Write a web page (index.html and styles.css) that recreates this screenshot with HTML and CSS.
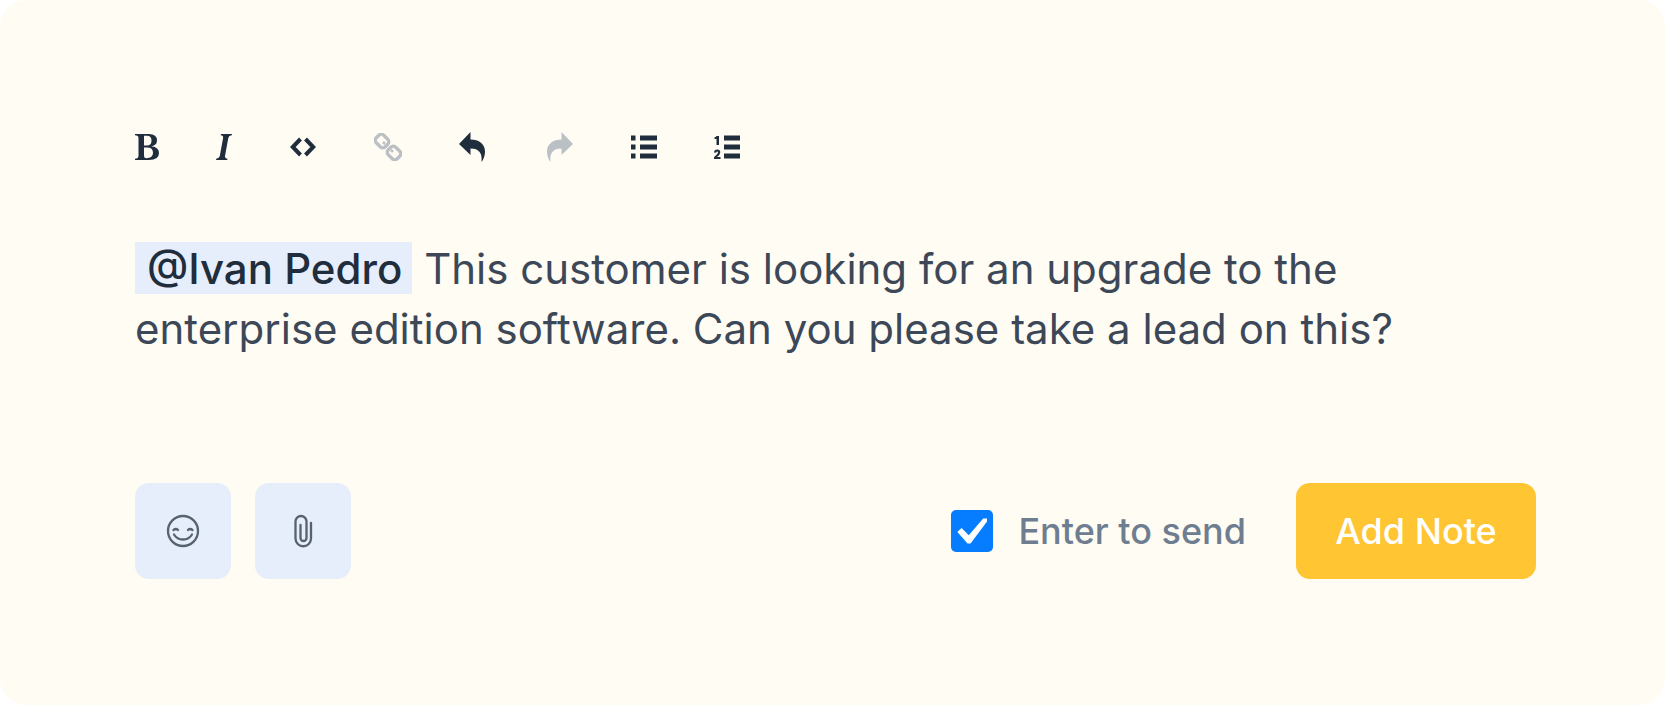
FILE: index.html
```html
<!DOCTYPE html>
<html lang="en">
<head>
<meta charset="utf-8">
<title>Add a private note</title>
<meta name="viewport" content="width=device-width, initial-scale=1">
<link rel="stylesheet" href="styles.css">
</head>
<body>
<form class="note">
  <div class="toolbar" role="toolbar" aria-label="Formatting">
    <button class="tool" type="button" aria-label="Bold">
      <svg width="24" height="28" viewBox="0 0 24 28"><path fill-rule="evenodd" d="M0 1H14Q22 1 22 7.500Q22 12 16.500 13.300Q24 14.500 24 20Q24 27 14 27H0V25.700Q3.500 25.500 3.500 23V5Q3.500 2.500 0 2.300ZM9 2.800V12.600H12Q16.500 12.600 16.500 7.600Q16.500 2.800 12 2.800ZM9 14.400V23Q9 25.200 11.500 25.200Q18 25.200 18 19.800Q18 14.400 12 14.400Z"/></svg>
    </button>
    <button class="tool" type="button" aria-label="Italic">
      <svg width="16" height="28" viewBox="0 0 16 28"><path d="M5 1H16L15.700 2.300Q12.800 2.600 12.300 5L9 23Q8.600 25.400 11.500 25.700L11.200 27H0L.3 25.700Q3.300 25.400 3.800 23L7.100 5Q7.500 2.600 4.700 2.300Z"/></svg>
    </button>
    <button class="tool" type="button" aria-label="Code">
      <svg width="28" height="28" viewBox="-1 0 28 28"><path class="line" stroke-width="4" d="M10.500 6 2.800 14l7.700 8M15.500 6l7.700 8-7.700 8"/></svg>
    </button>
    <button class="tool" type="button" aria-label="Link" disabled>
      <svg width="28" height="28" viewBox="0 0 28 28"><g class="line" stroke-width="3.400"><rect x="-6.300" y="-5.300" width="12.600" height="10.600" rx="3.500" transform="translate(8 8) rotate(45)"/><rect x="-6.300" y="-5.300" width="12.600" height="10.600" rx="3.500" transform="translate(20 20) rotate(45)"/><path stroke-width="2.500" d="M9 9l2 2M17 17l2 2"/></g></svg>
    </button>
    <button class="tool" type="button" aria-label="Undo">
      <svg width="26" height="30" viewBox="0 0 26 30"><path d="M0 12 11.500 0V7.500C20 7.500 26 12 26 19.500Q26 25.500 22.500 30C23.500 21 20 16.500 11.500 16.500V23Z"/></svg>
    </button>
    <button class="tool" type="button" aria-label="Redo" disabled>
      <svg width="32" height="30" viewBox="-5 0 32 30"><path d="M26 12 14.500 0V7.500C6 7.500 0 12 0 19.500Q0 25.500 3.500 30C2.500 21 6 16.500 14.500 16.500V23Z"/></svg>
    </button>
    <button class="tool" type="button" aria-label="Bulleted list">
      <svg width="26" height="24" viewBox="0 0 26 24"><path d="M0 0.500h4.500v5H0zM9 0.500h17v5H9zM0 9.500h4.500v5H0zM9 9.500h17v5H9zM0 18.500h4.500v5H0zM9 18.500h17v5H9z"/></svg>
    </button>
    <button class="tool" type="button" aria-label="Numbered list">
      <svg width="26" height="24" viewBox="0 0 26 24"><path d="M10 0.500h16v5H10zM10 9.500h16v5H10zM10 18.500h16v5H10zM2.500 1H5V10H2.500V4H.5V2.200Q2 2.200 2.500 1ZM0 17.500Q.2 14.500 3.200 14.500Q6.300 14.500 6.300 17.300Q6.300 19.500 3 22H6.500V24H0V22.200Q4 19 4 17.600Q4 16.400 3.100 16.400Q2.200 16.400 2.200 17.800Z"/></svg>
    </button>
  </div>

  <div class="message" contenteditable="true" role="textbox" aria-multiline="true" aria-label="Note" spellcheck="false"><span class="mention">@Ivan Pedro</span> This customer is looking for an upgrade to the enterprise edition software. Can you please take a lead on this?</div>

  <div class="actions">
    <button class="square" type="button" aria-label="Insert emoji">
      <svg width="34" height="34" viewBox="0 0 34 34"><g class="line" stroke-width="2.300" stroke-linecap="round"><circle cx="17" cy="17" r="15"/><path d="M8 20.500Q11 25.500 17 25.500T26 20.500"/><path d="M7.500 16Q10 14 12 16M22 16Q24 14 26.500 16"/></g></svg>
    </button>
    <button class="square" type="button" aria-label="Attach file">
      <svg width="34" height="34" viewBox="0 0 34 34"><path class="line" stroke-width="2.300" stroke-linecap="round" d="M25 9V24.500a7.500 7.500 0 0 1-15.500 0V7.500a5.500 5.500 0 0 1 11 0V24a3 3 0 0 1-6 0V11"/></svg>
    </button>
    <label class="send"><input class="check" type="checkbox" checked>Enter to send</label>
    <button class="submit" type="submit">Add Note</button>
  </div>
</form>
</body>
</html>
```
FILE: styles.css
```css
* {
  box-sizing: border-box;
}

body {
  margin: 0;
  background: #fff;
  font-family: Inter, "Liberation Sans", sans-serif;
}

.note {
  display: flex;
  flex-direction: column;
  min-height: 100vh;
  padding: 127px 129px 126px 135px;
  border-radius: 26px;
  background: #fffcf4;
}

.toolbar {
  display: flex;
  align-items: center;
  gap: 57px;
  height: 40px;
}

button {
  display: flex;
  align-items: center;
  justify-content: center;
  padding: 0;
  border: 0;
  font: inherit;
  cursor: pointer;
}

.tool {
  background: none;
  color: #1f2d3d;
}

.tool:disabled {
  color: #bbc0c5;
  cursor: default;
}

svg {
  display: block;
  fill: currentColor;
}

.line {
  fill: none;
  stroke: currentColor;
}

.message {
  margin-top: 72px;
  color: #3c4858;
  font-size: 42px;
  line-height: 60px;
  outline: none;
}

.mention {
  padding: 1px 10px 0 12px;
  background: #e6edfb;
  color: #1f2d3d;
  font-weight: 500;
}

.actions {
  display: flex;
  align-items: center;
  gap: 24px;
  margin-top: auto;
}

.square {
  width: 96px;
  height: 96px;
  border-radius: 14px;
  background: #e6edfb;
  color: #56636f;
}

.send {
  display: flex;
  align-items: center;
  gap: 25px;
  margin-left: auto;
  color: #6e7d8f;
  font-size: 36px;
  font-weight: 500;
}

.check {
  appearance: none;
  display: grid;
  place-items: center;
  width: 42px;
  height: 42px;
  margin: 0;
  border: 2px solid #067dff;
  border-radius: 5px;
}

.check:checked {
  background: #067dff;
}

.check:checked::before {
  content: "";
  width: 30px;
  height: 26px;
  background: #fff;
  clip-path: polygon(0 54%, 14% 38%, 38% 66%, 86% 2%, 100% 2%, 100% 12%, 44% 98%, 34% 98%);
}

.submit {
  min-width: 240px;
  height: 96px;
  margin-left: 26px;
  padding: 0 36px;
  border-radius: 14px;
  background: #ffc532;
  color: #fff;
  font-size: 36px;
  font-weight: 500;
}
```
